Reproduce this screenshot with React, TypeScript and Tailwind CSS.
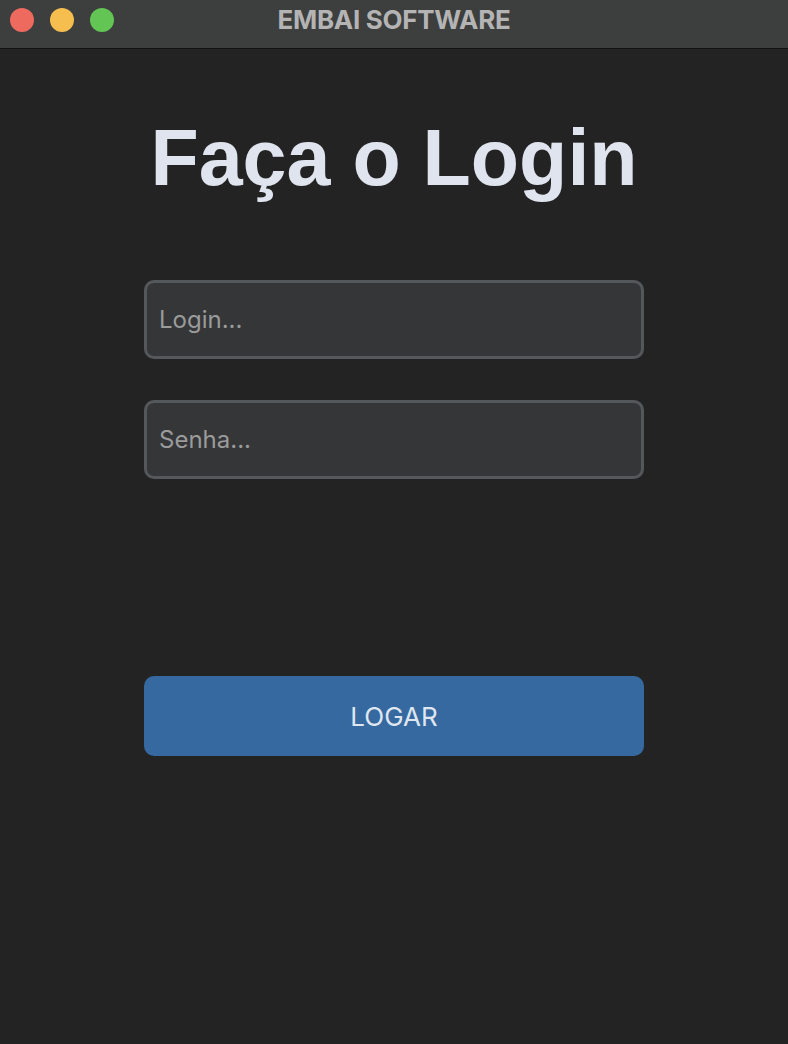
import React from 'react';

export default function App() {
  return (
    <div className="w-[788px] h-[1044px] bg-[#232323] flex flex-col overflow-hidden" style={{ fontFamily: 'Inter, "Noto Sans", sans-serif' }}>
      {/* window title bar */}
      <div className="h-[49px] shrink-0 bg-[#3d3e3e] border-b border-[#121212] relative flex items-center justify-center">
        <div className="absolute left-[10px] top-[8px] flex gap-[16px]">
          <span className="w-[24px] h-[24px] rounded-full bg-[#ee6a5f]" />
          <span className="w-[24px] h-[24px] rounded-full bg-[#f5be4f]" />
          <span className="w-[24px] h-[24px] rounded-full bg-[#62c554]" />
        </div>
        <span className="text-[26px] font-bold text-[#b4b4b4] leading-none -mt-[9px] tracking-[-0.3px]">EMBAI SOFTWARE</span>
      </div>

      <div className="flex flex-col items-center">
        <h1
          className="mt-[69px] text-[79px] leading-none font-bold text-[#dfe4ee]"
          style={{ fontFamily: '"Liberation Sans", Arial, sans-serif' }}
        >
          Faça o Login
        </h1>

        <form className="w-[500px] mt-[83px] flex flex-col" onSubmit={e => e.preventDefault()}>
          <input
            type="text"
            placeholder="Login..."
            className="h-[79px] w-full rounded-[10px] border-[3px] border-[#55585b] bg-[#353638] px-[12px] text-[24px] text-[#e0e0e0] placeholder:text-[#9b9b9b] outline-none"
          />
          <input
            type="password"
            placeholder="Senha..."
            className="mt-[41px] h-[79px] w-full rounded-[10px] border-[3px] border-[#55585b] bg-[#353638] px-[12px] text-[24px] text-[#e0e0e0] placeholder:text-[#9b9b9b] outline-none"
          />
          <button
            type="submit"
            className="mt-[197px] h-[80px] w-full rounded-[10px] bg-[#3669a0] text-[26px] text-[#dfe6f0]"
          >
            LOGAR
          </button>
        </form>
      </div>
    </div>
  );
}
